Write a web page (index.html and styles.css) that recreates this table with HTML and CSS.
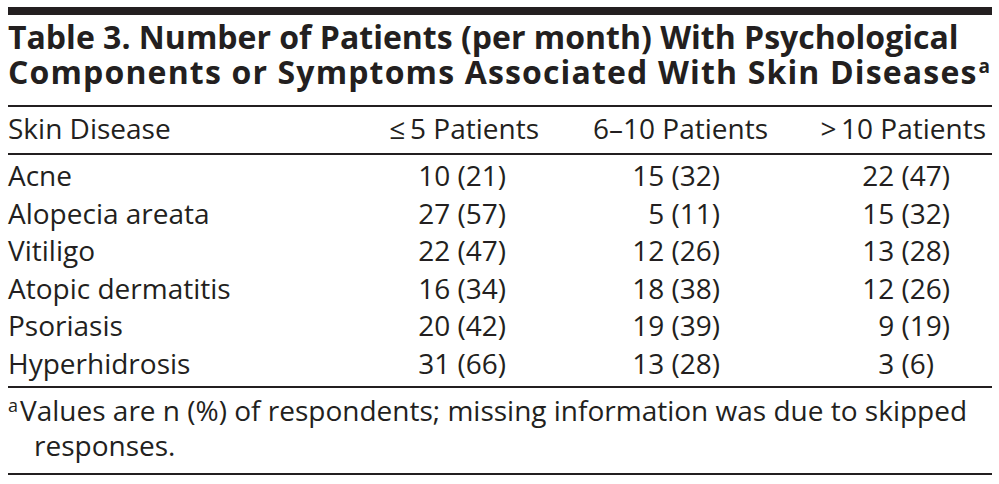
FILE: index.html
```html
<!DOCTYPE html>
<html lang="en">
<head>
<meta charset="utf-8">
<title>Table 3</title>
<link rel="stylesheet" href="styles.css">
</head>
<body>
<figure class="tbl">
  <h1 class="title"><span class="title-line">Table 3. Number of Patients (per month) With Psychological</span><span class="title-line title-line-wide">Components or Symptoms Associated With Skin Diseases<sup class="title-sup">a</sup></span></h1>
  <div class="thead">
    <div class="row">
      <div class="c-label">Skin Disease</div>
      <div class="c-h">≤&#8201;5 Patients</div>
      <div class="c-h">6–10 Patients</div>
      <div class="c-h">&gt;&#8201;10 Patients</div>
    </div>
  </div>
  <div class="tbody">
    <div class="row">
      <div class="c-label">Acne</div>
      <div class="c-d c1">10 (21)</div>
      <div class="c-d c2">15 (32)</div>
      <div class="c-d c3">22 (47)</div>
    </div>
    <div class="row">
      <div class="c-label">Alopecia areata</div>
      <div class="c-d c1">27 (57)</div>
      <div class="c-d c2">5 (11)</div>
      <div class="c-d c3">15 (32)</div>
    </div>
    <div class="row">
      <div class="c-label">Vitiligo</div>
      <div class="c-d c1">22 (47)</div>
      <div class="c-d c2">12 (26)</div>
      <div class="c-d c3">13 (28)</div>
    </div>
    <div class="row">
      <div class="c-label">Atopic dermatitis</div>
      <div class="c-d c1">16 (34)</div>
      <div class="c-d c2">18 (38)</div>
      <div class="c-d c3">12 (26)</div>
    </div>
    <div class="row">
      <div class="c-label">Psoriasis</div>
      <div class="c-d c1">20 (42)</div>
      <div class="c-d c2">19 (39)</div>
      <div class="c-d c3">9 (19)</div>
    </div>
    <div class="row">
      <div class="c-label">Hyperhidrosis</div>
      <div class="c-d c1">31 (66)</div>
      <div class="c-d c2">13 (28)</div>
      <div class="c-d c3">3 (6)<span class="fig">0</span></div>
    </div>
  </div>
  <p class="note"><sup class="note-sup">a</sup>Values are n (%) of respondents; missing information was due to skipped responses.</p>
</figure>
</body>
</html>
```
FILE: styles.css
```css
html, body {
  background: #ffffff;
}
body {
  margin: 0;
  padding: 7px 7px 0 8px;
  font-family: "Open Sans", "Noto Sans", sans-serif;
  color: #231f20;
}
.tbl {
  margin: 0;
  width: 984px;
  border-top: 8px solid #231f20;
}
.title {
  margin: 0;
  padding: 3.5px 0 16.5px;
  font-size: 32px;
  line-height: 35px;
  font-weight: 700;
  border-bottom: 2px solid #231f20;
}
.title-line {
  display: block;
  white-space: nowrap;
}
.title-line-wide {
  letter-spacing: 1.15px;
}
.title-sup {
  font-size: 19px;
  line-height: 0;
  vertical-align: 11px;
  margin-left: 1px;
  letter-spacing: 0;
}
.thead {
  padding: 3px 0 6px;
  border-bottom: 2px solid #231f20;
}
.tbody {
  padding: 2px 0 3.4px;
  border-bottom: 2px solid #231f20;
}
.row {
  display: grid;
  grid-template-columns: 1fr 150px 229px 218px;
  padding-right: 6px;
  font-size: 28px;
  line-height: 37px;
}
.tbody .row {
  line-height: 37.6px;
}
.c-h {
  text-align: right;
}
.c-d {
  text-align: right;
}
.c1 { padding-right: 33px; }
.c2 { padding-right: 48px; }
.c3 { padding-right: 36px; }
.fig {
  visibility: hidden;
}
.note {
  margin: 0;
  padding: 5px 0 10px 26px;
  text-indent: -26px;
  font-size: 28px;
  line-height: 35px;
  border-bottom: 2px solid #231f20;
}
.note-sup {
  font-size: 18px;
  line-height: 0;
  vertical-align: 9px;
  margin-right: 2px;
}
```
